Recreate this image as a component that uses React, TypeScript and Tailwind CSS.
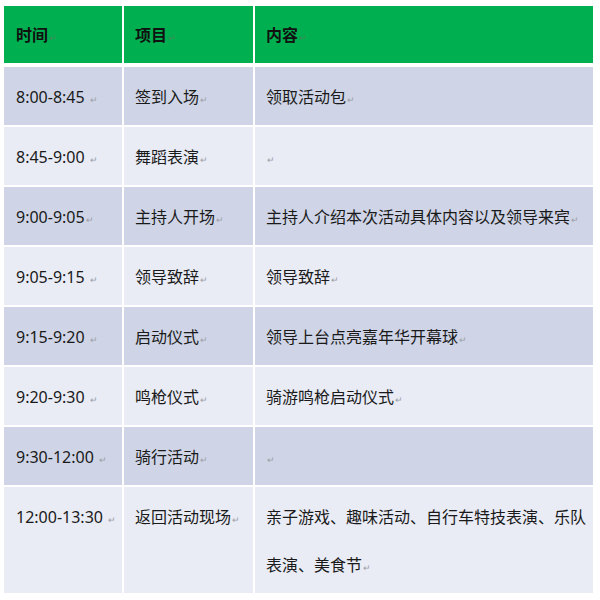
import React from "react";

const Mark = ({ green }: { green?: boolean }) => (
  <span
    className={`text-[9px] leading-none font-normal ml-[1px] ${green ? "text-[#3f8a5a]" : "text-[#9aa0a8]"}`}
  >
    ↵
  </span>
);

type Row = { t: string; sp?: boolean; item: string; content: React.ReactNode; dark: boolean; tall?: boolean };

const rows: Row[] = [
  { t: "8:00-8:45", sp: true, item: "签到入场", content: "领取活动包", dark: true },
  { t: "8:45-9:00", sp: true, item: "舞蹈表演", content: "", dark: false },
  { t: "9:00-9:05", item: "主持人开场", content: "主持人介绍本次活动具体内容以及领导来宾", dark: true },
  { t: "9:05-9:15", sp: true, item: "领导致辞", content: "领导致辞", dark: false },
  { t: "9:15-9:20", sp: true, item: "启动仪式", content: "领导上台点亮嘉年华开幕球", dark: true },
  { t: "9:20-9:30", sp: true, item: "鸣枪仪式", content: "骑游鸣枪启动仪式", dark: false },
  { t: "9:30-12:00", sp: true, item: "骑行活动", content: "", dark: true },
  {
    t: "12:00-13:30",
    sp: true,
    item: "返回活动现场",
    content: (
      <>
        亲子游戏、趣味活动、自行车特技表演、乐队
        <br />
        表演、美食节
      </>
    ),
    dark: false,
    tall: true,
  },
];

export default function App() {
  return (
    <div
      className="w-[600px] h-[600px] bg-white overflow-hidden pt-[6px] pl-[4px]"
      style={{ fontFamily: '"Noto Sans", "Noto Sans CJK SC", sans-serif' }}
    >
      <div className="flex flex-col w-[589px]">
        <div className="grid grid-cols-[118px_129px_338px] gap-x-[2px] mb-[4px]">
          <div className="bg-[#00b050] h-[57px] pl-[12px] pt-[5px] leading-[48px] text-[16px] font-bold text-[#111]">
            时间<Mark green />
          </div>
          <div className="bg-[#00b050] h-[57px] pl-[11px] pt-[5px] leading-[48px] text-[16px] font-bold text-[#111]">
            项目<Mark green />
          </div>
          <div className="bg-[#00b050] h-[57px] pl-[11px] pt-[5px] leading-[48px] text-[16px] font-bold text-[#111]">
            内容<Mark green />
          </div>
        </div>
        <div className="flex flex-col gap-y-[2px]">
          {rows.map((r, i) => {
            const bg = r.dark ? "bg-[#cfd5e6]" : "bg-[#e9ecf5]";
            const h = r.tall ? "h-[106px]" : "h-[58px]";
            const cell = `${bg} ${h} overflow-hidden pt-[6px] leading-[48px] text-[16px] text-[#1a1a1a] whitespace-nowrap`;
            return (
              <div key={i} className="grid grid-cols-[118px_129px_338px] gap-x-[2px]">
                <div className={`${cell} pl-[12px]`}>
                  {r.t}
                  {r.sp ? " " : ""}
                  <Mark />
                </div>
                <div className={`${cell} pl-[11px]`}>
                  {r.item}
                  <Mark />
                </div>
                <div className={`${cell} pl-[11px]`}>
                  {r.content}
                  <Mark />
                </div>
              </div>
            );
          })}
        </div>
      </div>
    </div>
  );
}
